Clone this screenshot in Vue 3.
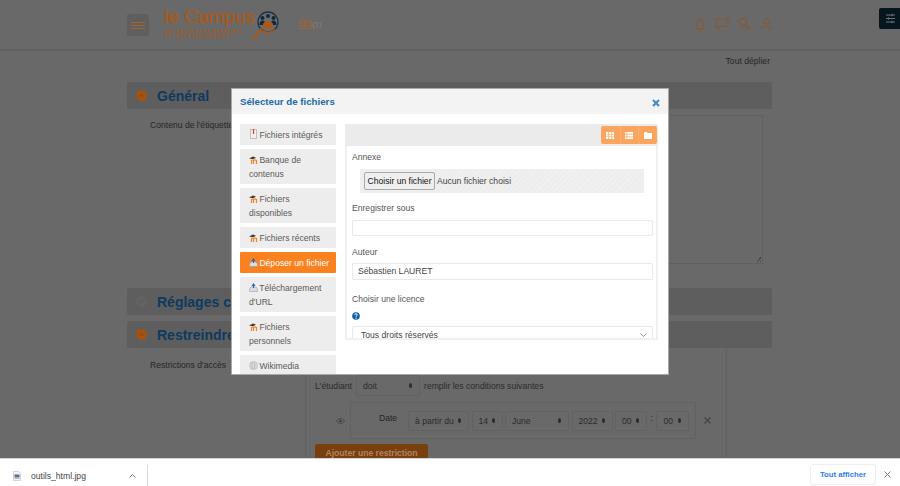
<script setup>
const repos = [
  { label: 'Fichiers intégrés', icon: 'file' },
  { label: 'Banque de contenus', icon: 'moodle' },
  { label: 'Fichiers disponibles', icon: 'moodle' },
  { label: 'Fichiers récents', icon: 'moodle' },
  { label: 'Déposer un fichier', icon: 'upload', active: true },
  { label: "Téléchargement d'URL", icon: 'upload' },
  { label: 'Fichiers personnels', icon: 'moodle' },
  { label: 'Wikimedia', icon: 'wiki' },
]
const dateSelects = [
  { text: 'à partir du', cls: 'w61' },
  { text: '14', cls: 'w31' },
  { text: 'June', cls: 'w64' },
  { text: '2022', cls: 'w41' },
  { text: '00', cls: 'w32' },
]
</script>

<template>
  <div class="screen">
    <div class="viewport">
      <header class="topbar">
        <div class="topbar-in">
          <button class="burger"><span></span><span></span><span></span></button>
          <div class="logo">
            <div class="logo-name">le Campus</div>
            <div class="logo-sub">DES BANQUES ALIMENTAIRES<br />ET LEURS PARTENAIRES</div>
          </div>
          <svg class="logo-mark" width="28" height="30" viewBox="0 0 28 30">
            <line x1="8" y1="21" x2="2" y2="28" stroke="#a9591a" stroke-width="2.4" stroke-linecap="round" />
            <circle cx="16" cy="12" r="10" fill="#6d6d6d" stroke="#1e3346" stroke-width="1.3" />
            <path d="M8 18.500a10 10 0 0 0 15 1" fill="none" stroke="#a9591a" stroke-width="1.6" />
            <circle cx="10.500" cy="8" r="2" fill="#12283c" /><circle cx="21.500" cy="8" r="2" fill="#12283c" /><circle cx="16" cy="6" r="2" fill="#12283c" />
            <path d="M7.500 15q0-4.500 3-4.500t3 4.500zM18.500 15q0-4.500 3-4.500t3 4.500z" fill="#12283c" />
            <ellipse cx="16" cy="15" rx="5.200" ry="3.800" fill="#a9591a" />
          </svg>
          <div class="book">
            <svg width="13" height="9" viewBox="0 0 13 9"><path d="M.5.5h5.500v8H.5zM7 .5h5.500v8H7zM2 3h2.500M2 5.500h2.500M8.500 3H11M8.500 5.500H11" fill="none" stroke="#a3642f" stroke-width=".9" /></svg>
            <span>(1)</span>
          </div>
          <div class="top-icons">
            <svg width="12" height="14" viewBox="0 0 12 14"><path d="M1.500 11.500c1.200-1 1.500-3 1.500-5C3 4 4.200 2.500 6 2.500S9 4 9 6.500c0 2 .3 4 1.500 5zM6 1v1.500M5 12.500a1 1 0 0 0 2 0" fill="none" stroke="#96521c" stroke-width=".8" /></svg>
            <svg width="14" height="12" viewBox="0 0 14 12"><path d="M1 1h12v7.500H4.500L2.500 11V8.500H1z" fill="none" stroke="#96521c" stroke-width=".8" /></svg>
            <svg width="13" height="13" viewBox="0 0 13 13"><circle cx="5" cy="5" r="3.800" fill="none" stroke="#96521c" stroke-width=".9" /><line x1="8" y1="8" x2="12" y2="12" stroke="#96521c" stroke-width="1.600" /></svg>
            <svg width="13" height="12" viewBox="0 0 13 12"><circle cx="6.500" cy="3.500" r="2.700" fill="none" stroke="#96521c" stroke-width=".8" /><path d="M.5 11.500c1.500-2.500 3.500-3 6-3s4.500.5 6 3" fill="none" stroke="#96521c" stroke-width=".8" /></svg>
          </div>
        </div>
      </header>

      <button class="drawer-btn">
        <svg width="11" height="11" viewBox="0 0 11 11"><path d="M1 2h9M1 5.500h9M1 9h9" stroke="#6c7478" /><path d="M7 .8v2.400M3.500 4.300v2.400M7 7.800v2.400" stroke="#6c7478" /></svg>
      </button>

      <main class="page">
        <div class="expand">Tout déplier</div>

        <section class="sec-head">
          <span class="sec-dot"><svg width="5" height="3" viewBox="0 0 5 3"><path d="M.5 2.500l2-2 2 2" fill="none" stroke="#6c4a30" /></svg></span>
          <h3>Général</h3>
        </section>
        <div class="general">
          <div class="field-label">Contenu de l'étiquette</div>
          <div class="editor"><span class="resizer"></span></div>
        </div>

        <section class="sec-head">
          <span class="sec-dot off"><svg width="5" height="3" viewBox="0 0 5 3"><path d="M.5.500l2 2 2-2" fill="none" stroke="#565656" /></svg></span>
          <h3>Réglages courants</h3>
        </section>
        <section class="sec-head second">
          <span class="sec-dot"><svg width="5" height="3" viewBox="0 0 5 3"><path d="M.5 2.500l2-2 2 2" fill="none" stroke="#6c4a30" /></svg></span>
          <h3>Restreindre l'accès</h3>
        </section>

        <div class="access">
          <div class="field-label access-label">Restrictions d'accès</div>
          <div class="access-box">
            <div class="rule-line">
              <span>L'étudiant</span>
              <span class="dim-select w64 tallish">doit<i class="updown"></i></span>
              <span>remplir les conditions suivantes</span>
            </div>
            <div class="date-line">
              <svg class="eye" width="9" height="6" viewBox="0 0 9 6"><path d="M.5 3q4-5 8 0-4 5-8 0z" fill="none" stroke="#3c3c3c" stroke-width=".7" /><circle cx="4.500" cy="3" r="1.300" fill="#3c3c3c" /></svg>
              <div class="date-box">
                <span class="date-label">Date</span>
                <span v-for="s in dateSelects" :key="s.text" class="dim-select" :class="s.cls">{{ s.text }}<i class="updown"></i></span>
                <span class="colon">:</span>
                <span class="dim-select w33">00<i class="updown"></i></span>
              </div>
              <svg class="del" width="7" height="7" viewBox="0 0 7 7"><path d="M.5.500l6 6M6.500.500l-6 6" stroke="#444" stroke-width="1.100" /></svg>
            </div>
            <button class="add-btn">Ajouter une restriction</button>
          </div>
        </div>
      </main>

      <div class="modal">
        <div class="modal-head">
          <span class="modal-title">Sélecteur de fichiers</span>
          <svg class="modal-close" width="8" height="8" viewBox="0 0 8 8"><path d="M1 1l6 6M7 1L1 7" stroke="#4588bd" stroke-width="2" /></svg>
        </div>
        <div class="modal-body">
          <nav class="repo-list">
            <a v-for="r in repos" :key="r.label" class="repo" :class="{ active: r.active }">
              <svg v-if="r.icon === 'file'" class="repo-ico" width="9" height="10" viewBox="0 0 9 10"><path d="M1.500.5h6v9h-6z" fill="#f6eeee" stroke="#a99" stroke-width=".6" /><path d="M4.500 0v5" stroke="#d23c3c" stroke-width="1.200" /></svg>
              <svg v-else-if="r.icon === 'moodle'" class="repo-ico" width="9" height="8" viewBox="0 0 9 8"><path d="M0 2.500l4-2 3 1.200-3 1.500z" fill="#3a3a3a" /><path d="M2.500 8V4.500q1.200-1 2 0V8M4.500 8V4.500q1.500-1.200 3 0V8" fill="none" stroke="#f58220" stroke-width="1.200" /></svg>
              <svg v-else-if="r.icon === 'upload'" class="repo-ico" width="9" height="9" viewBox="0 0 9 9"><path d="M.5 6l1.500-2h5l1.500 2v2.500h-8z" fill="#d9dde3" stroke="#8a94a0" stroke-width=".5" /><path d="M4.500 5V1.500M3 3l1.500-2L6 3" fill="none" stroke="#2f6aa8" stroke-width="1.100" /></svg>
              <svg v-else class="repo-ico" width="9" height="9" viewBox="0 0 9 9"><circle cx="4.500" cy="4.500" r="4" fill="#dcdcdc" stroke="#aaa" stroke-width=".5" /><path d="M3 1v7M5 .8q2 3.700 0 7.400" fill="none" stroke="#999" stroke-width=".5" /></svg>
              {{ r.label }}
            </a>
          </nav>

          <div class="panel">
            <div class="panel-tools">
              <div class="view-btns">
                <span class="view-btn">
                  <svg width="8" height="7" viewBox="0 0 8 7"><path d="M0 0h2.200v1.900H0zM2.900 0h2.200v1.900H2.900zM5.800 0H8v1.900H5.800zM0 2.500h2.200v1.900H0zM2.900 2.500h2.200v1.900H2.900zM5.800 2.500H8v1.900H5.800zM0 5h2.200v2H0zM2.900 5h2.200v2H2.900zM5.800 5H8v2H5.800z" fill="#fff" /></svg>
                </span>
                <span class="view-btn">
                  <svg width="8" height="7" viewBox="0 0 8 7"><path d="M0 0h1.600v1.800H0zM2.200 0H8v1.800H2.200zM0 2.600h1.600v1.800H0zM2.200 2.600H8v1.800H2.200zM0 5.200h1.600V7H0zM2.200 5.200H8V7H2.200z" fill="#fff" /></svg>
                </span>
                <span class="view-btn">
                  <svg width="8" height="7" viewBox="0 0 8 7"><path d="M0 .8q0-.8.800-.8h2l.8 1h3.600q.8 0 .8.800v4.400q0 .8-.8.800H.8Q0 7 0 6.200z" fill="#fff" /></svg>
                </span>
              </div>
            </div>
            <div class="form">
              <label class="f-label">Annexe</label>
              <div class="picker">
                <span class="picker-btn">Choisir un fichier</span>
                <span class="picker-none">Aucun fichier choisi</span>
              </div>
              <label class="f-label save">Enregistrer sous</label>
              <div class="f-input"></div>
              <label class="f-label author">Auteur</label>
              <div class="f-input tall">Sébastien LAURET</div>
              <label class="f-label licence">Choisir une licence</label>
              <svg class="help" width="8" height="8" viewBox="0 0 8 8"><circle cx="4" cy="4" r="3.800" fill="#0f5fa6" /><path d="M2.700 3q0-1.300 1.300-1.300T5.300 2.900Q5.300 3.600 4 4.300v.6" fill="none" stroke="#fff" stroke-width=".9" /><circle cx="4" cy="6.200" r=".6" fill="#fff" /></svg>
              <div class="f-select">
                Tous droits réservés
                <svg width="7" height="4" viewBox="0 0 7 4"><path d="M.5.500l3 3 3-3" fill="none" stroke="#777" stroke-width=".8" /></svg>
              </div>
            </div>
          </div>
        </div>
      </div>
    </div>

    <footer class="dl-bar">
      <div class="dl-item">
        <svg width="8" height="10" viewBox="0 0 8 10"><path d="M.5.500h5l2 2v7h-7z" fill="#f4f4f4" stroke="#bbb" stroke-width=".6" /><path d="M1.500 3.500h5v3h-5z" fill="#5a6f96" /><path d="M1.500 7.500h5" stroke="#9aa" stroke-width=".8" /></svg>
        <span class="dl-name">outils_html.jpg</span>
        <svg class="dl-caret" width="7" height="4" viewBox="0 0 7 4"><path d="M.5 3.500l3-3 3 3" fill="none" stroke="#666" stroke-width=".9" /></svg>
      </div>
      <button class="dl-all">Tout afficher</button>
      <svg class="dl-x" width="7" height="7" viewBox="0 0 7 7"><path d="M.5.500l6 6M6.500.500l-6 6" stroke="#666" stroke-width=".9" /></svg>
    </footer>
  </div>
</template>

<style>
html, body { margin: 0; background: #696969; }
</style>

<style scoped>
.screen {
  width: 900px;
  height: 486px;
  display: flex;
  flex-direction: column;
  overflow: hidden;
  font-family: "Liberation Sans", Arial, sans-serif;
  font-size: 8.6px;
  color: #2b2b2b;
}
.viewport {
  position: relative;
  flex: 1;
  min-height: 0;
  overflow: hidden;
  background: #696969;
}
.topbar {
  height: 50px;
  box-sizing: border-box;
  border-bottom: 1px solid #5f5f5f;
  box-shadow: 0 1px 1px #646464;
}
.topbar-in {
  width: 645px;
  height: 100%;
  margin-left: 127px;
  display: flex;
  align-items: center;
}
.burger {
  width: 22px;
  height: 22px;
  margin: 1px 0 0;
  padding: 0 4px;
  border: 0;
  border-radius: 2px;
  background: #5f5f5f;
  display: flex;
  flex-direction: column;
  justify-content: center;
  gap: 2px;
}
.burger span { display: block; height: 1px; background: #a3642f; }
.logo { margin-left: 15px; color: #a8591a; width: 91px; margin-top: -2px; }
.logo-name {
  font-size: 19px;
  line-height: 20px;
  white-space: nowrap;
  margin-top: -1px;
  -webkit-text-stroke: .35px #a8591a;
}
.logo-sub { font-size: 4.200px; font-weight: 700; line-height: 5.500px; letter-spacing: .65px; white-space: nowrap; margin-top: 2px; }
.logo-mark { margin-left: -3px; }
.book {
  margin-left: 19px;
  display: flex;
  align-items: center;
  color: #8d8078;
  font-size: 8px;
  margin-top: -1px;
}
.top-icons {
  margin-left: auto;
  margin-right: -1px;
  margin-top: -2px;
  display: flex;
  align-items: center;
  gap: 9px;
}
.drawer-btn {
  position: absolute;
  top: 8px;
  right: 0;
  width: 21px;
  height: 21px;
  padding: 0 0 0 2px;
  border: 0;
  border-radius: 2px 0 0 2px;
  background: #06161f;
  display: flex;
  align-items: center;
  justify-content: center;
}
.page {
  width: 645px;
  margin-left: 127px;
}
.expand {
  text-align: right;
  padding: 5px 2px 0 0;
  line-height: 12px;
  height: 27px;
  box-sizing: border-box;
  color: #262626;
}
.sec-head {
  height: 27px;
  background: #5e5e5e;
  border-radius: 2px;
  display: flex;
  align-items: center;
  padding-left: 9px;
  margin-top: 5px;
}
.sec-head.second { margin-top: 6px; }
.sec-head h3 {
  margin: 0 0 0 10px;
  font-size: 14px;
  font-weight: 700;
  color: #0e3a5e;
  white-space: nowrap;
}
.sec-dot {
  width: 11px;
  height: 11px;
  border-radius: 50%;
  background: #a5510f;
  display: flex;
  align-items: center;
  justify-content: center;
}
.sec-dot.off { background: #636363; }
.general {
  display: flex;
  padding: 6px 9px 19px 23px;
}
.field-label { width: 155px; line-height: 20px; color: #262626; flex-shrink: 0; }
.editor {
  flex: 1;
  height: 149px;
  box-sizing: border-box;
  border: 1px solid #606060;
  position: relative;
}
.resizer {
  position: absolute;
  right: 1px;
  bottom: 1px;
  width: 5px;
  height: 5px;
  background: linear-gradient(135deg, transparent 50%, #444 50%, #444 65%, transparent 65%, transparent 80%, #444 80%);
}
.access { padding: 0 0 0 23px; display: flex; }
.access-label { margin-top: 7px; }
.access-box {
  flex: 1;
  margin-right: 45px;
  box-sizing: border-box;
  height: 120px;
  padding: 27px 0 0 9px;
  border-left: 1px solid #626262;
  border-right: 1px solid #626262;
}
.rule-line { display: flex; align-items: center; gap: 4px; height: 21px; }
.dim-select {
  position: relative;
  display: inline-flex;
  align-items: center;
  box-sizing: border-box;
  height: 20px;
  padding-left: 6px;
  border: 1px solid #626262;
  border-radius: 2px;
  color: #2b2b2b;
  flex-shrink: 0;
}
.tallish { height: 21px; }
.updown {
  position: absolute;
  right: 7px;
  top: calc(50% - 2.500px);
  width: 3px;
  height: 5px;
  background: #2b2b2b;
  border-radius: 50%;
}
.w61 { width: 61px; }
.w31 { width: 31px; }
.w64 { width: 64px; }
.w41 { width: 41px; }
.w32 { width: 32px; }
.w33 { width: 33px; }
.date-line { display: flex; align-items: center; margin-top: 6px; }
.eye { margin: 0 5px 0 21px; }
.date-box {
  width: 346px;
  height: 37px;
  box-sizing: border-box;
  border: 1px solid #626262;
  border-radius: 2px;
  display: flex;
  align-items: center;
  gap: 2.500px;
  padding: 0 0 0 28px;
}
.date-label { width: 26.500px; align-self: flex-start; margin-top: 10px; color: #262626; flex-shrink: 0; }
.colon { margin: -6px 1px 0 1px; }
.del { margin-left: 8px; }
.add-btn {
  display: block;
  margin-top: 5px;
  width: 113px;
  height: 18px;
  padding: 0;
  border: 0;
  border-radius: 2px;
  background: #78400f;
  color: #b4845c;
  font: 700 8.6px "Liberation Sans", Arial, sans-serif;
}
.modal {
  position: absolute;
  left: 232px;
  top: 89px;
  width: 436px;
  height: 285px;
  background: #fff;
  box-shadow: 0 0 0 1px #a8a8a8;
  overflow: hidden;
}
.modal-head {
  height: 25px;
  box-sizing: border-box;
  padding: 0 8px;
  background: #f3f3f3;
  display: flex;
  align-items: center;
  justify-content: space-between;
}
.modal-title { font-weight: 700; font-size: 9.7px; color: #1a6aa6; }
.modal-close { margin-top: 2px; }
.modal-body {
  display: flex;
  align-items: flex-start;
  padding: 10px 10px 0 8px;
}
.repo-list {
  width: 96px;
  flex-shrink: 0;
  display: flex;
  flex-direction: column;
  gap: 4px;
}
.repo {
  display: block;
  padding: 3.500px 4px 3.500px 9px;
  background: #ededed;
  border-radius: 1px;
  color: #5a5a5a;
  line-height: 14px;
}
.repo.active { background: #f98120; color: #fff; }
.repo-ico { vertical-align: -1px; margin-right: -1px; }
.panel {
  width: 313px;
  margin-left: 9px;
  height: 216px;
  overflow: hidden;
  flex-shrink: 0;
}
.panel-tools {
  height: 22px;
  background: #ebebeb;
  display: flex;
  justify-content: flex-end;
  padding: 2px 1px 0 0;
  box-sizing: border-box;
}
.view-btns { display: flex; height: 18px; }
.view-btn {
  width: 18.700px;
  display: flex;
  align-items: center;
  justify-content: center;
  background: #fba55f;
  box-shadow: inset 1px 0 0 #fcb27a;
}
.view-btn:first-child { border-radius: 2px 0 0 2px; box-shadow: none; }
.view-btn:last-child { border-radius: 0 2px 2px 0; }
.form {
  height: 194px;
  box-sizing: border-box;
  padding: 0 3px 0 5px;
  border: 2px solid #f0f0f0;
  border-top: 0;
  overflow: hidden;
  color: #555;
}
.f-label { display: block; line-height: 12px; padding-top: 5px; }
.picker {
  margin: 6px 9px 0 8px;
  height: 24px;
  display: flex;
  align-items: center;
  padding-left: 4px;
  background: repeating-linear-gradient(135deg, #f0f0f0 0 2px, #ededed 2px 4px);
}
.picker-btn {
  box-sizing: border-box;
  width: 71px;
  height: 18px;
  line-height: 16px;
  text-align: center;
  background: #efefef;
  border: 1px solid #a8a8a8;
  border-radius: 2px;
  color: #111;
}
.picker-none { margin-left: 2px; color: #444; }
.save { padding-top: 9px; }
.f-input {
  height: 16px;
  margin-top: 6px;
  box-sizing: border-box;
  border: 1px solid #e9e9e9;
  border-radius: 1px;
}
.f-input.tall {
  height: 17px;
  margin-top: 5px;
  padding-left: 5px;
  line-height: 15px;
  color: #444;
}
.author { padding-top: 10px; }
.licence { padding-top: 13px; }
.help { display: block; margin: 7px 0 0 0; }
.f-select {
  margin-top: 6px;
  height: 18px;
  box-sizing: border-box;
  border: 1px solid #e9e9e9;
  border-radius: 2px;
  padding: 0 5px 0 8px;
  color: #444;
  display: flex;
  justify-content: space-between;
  align-items: center;
}
.dl-bar {
  height: 28px;
  box-sizing: border-box;
  flex-shrink: 0;
  background: #fff;
  border-top: 1px solid #d6d6d6;
  display: flex;
  align-items: center;
}
.dl-item {
  width: 148px;
  height: 22px;
  box-sizing: border-box;
  margin-top: 6px;
  padding: 0 11px 0 13px;
  display: flex;
  align-items: center;
  border-right: 1px solid #dadada;
}
.dl-name { margin-left: 10px; color: #444; }
.dl-caret { margin-left: auto; }
.dl-all {
  margin-left: auto;
  width: 66px;
  height: 21px;
  margin-top: 4px;
  padding: 0;
  border: 1px solid #ededed;
  border-radius: 3px;
  background: #fff;
  color: #2b7de9;
  font: 700 7.700px "Liberation Sans", Arial, sans-serif;
}
.dl-x { margin: 3px 9px 0 8px; }
</style>
